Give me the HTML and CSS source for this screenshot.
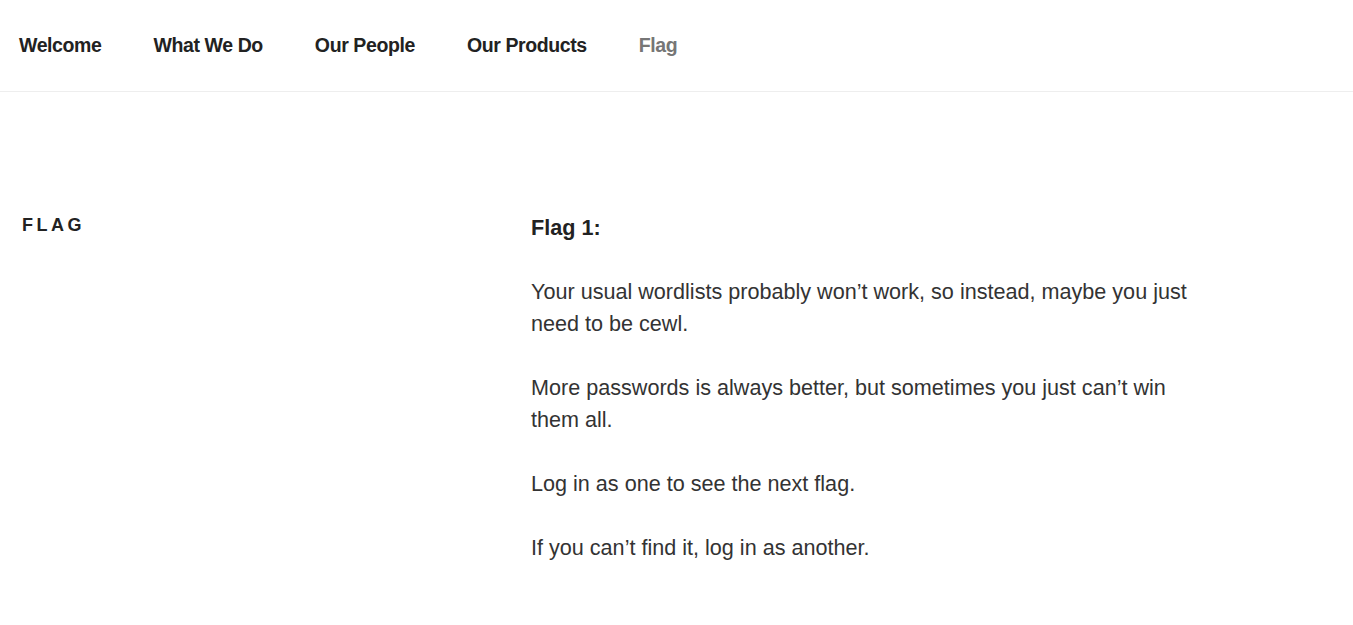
FILE: index.html
```html
<!DOCTYPE html>
<html lang="en">
<head>
<meta charset="utf-8">
<title>Flag</title>
<link rel="stylesheet" href="styles.css">
</head>
<body>
<header class="site-nav">
  <nav class="menu">
    <a class="menu-item" href="#">Welcome</a>
    <a class="menu-item" href="#">What We Do</a>
    <a class="menu-item" href="#">Our People</a>
    <a class="menu-item" href="#">Our Products</a>
    <a class="menu-item current" href="#">Flag</a>
  </nav>
</header>
<main class="page">
  <h1 class="page-title">Flag</h1>
  <div class="entry">
    <p class="flag-title"><strong>Flag 1:</strong></p>
    <p>Your usual wordlists probably won’t work, so instead, maybe you just need to be cewl.</p>
    <p>More passwords is always better, but sometimes you just can’t win them all.</p>
    <p>Log in as one to see the next flag.</p>
    <p>If you can’t find it, log in as another.</p>
  </div>
</main>
</body>
</html>
```

FILE: styles.css
```css
html, body {
  margin: 0;
  padding: 0;
  background: #fff;
}
body {
  font-family: "Liberation Sans", Arial, sans-serif;
  color: #333;
}
.site-nav {
  height: 91px;
  border-bottom: 1px solid #eee;
  display: flex;
  align-items: center;
}
.menu {
  display: flex;
  gap: 52px;
  padding-left: 19px;
  margin-top: 0;
}
.menu-item {
  font-size: 19.5px;
  font-weight: bold;
  color: #222;
  text-decoration: none;
  letter-spacing: -0.4px;
}
.menu-item.current {
  color: #767676;
}
.page {
  display: flex;
  padding: 121px 0 0 22px;
}
.page-title {
  width: 509px;
  flex: none;
  margin: 0;
  font-size: 18px;
  font-weight: 800;
  letter-spacing: 3.5px;
  text-transform: uppercase;
  color: #222;
  line-height: 24px;
}
.entry {
  width: 675px;
  font-size: 21.6px;
  line-height: 32px;
  color: #333;
  padding-top: 4px;
}
.entry p {
  margin: 0 0 32px;
}
.entry .flag-title {
  margin-top: -5px;
  color: #222;
}
```
